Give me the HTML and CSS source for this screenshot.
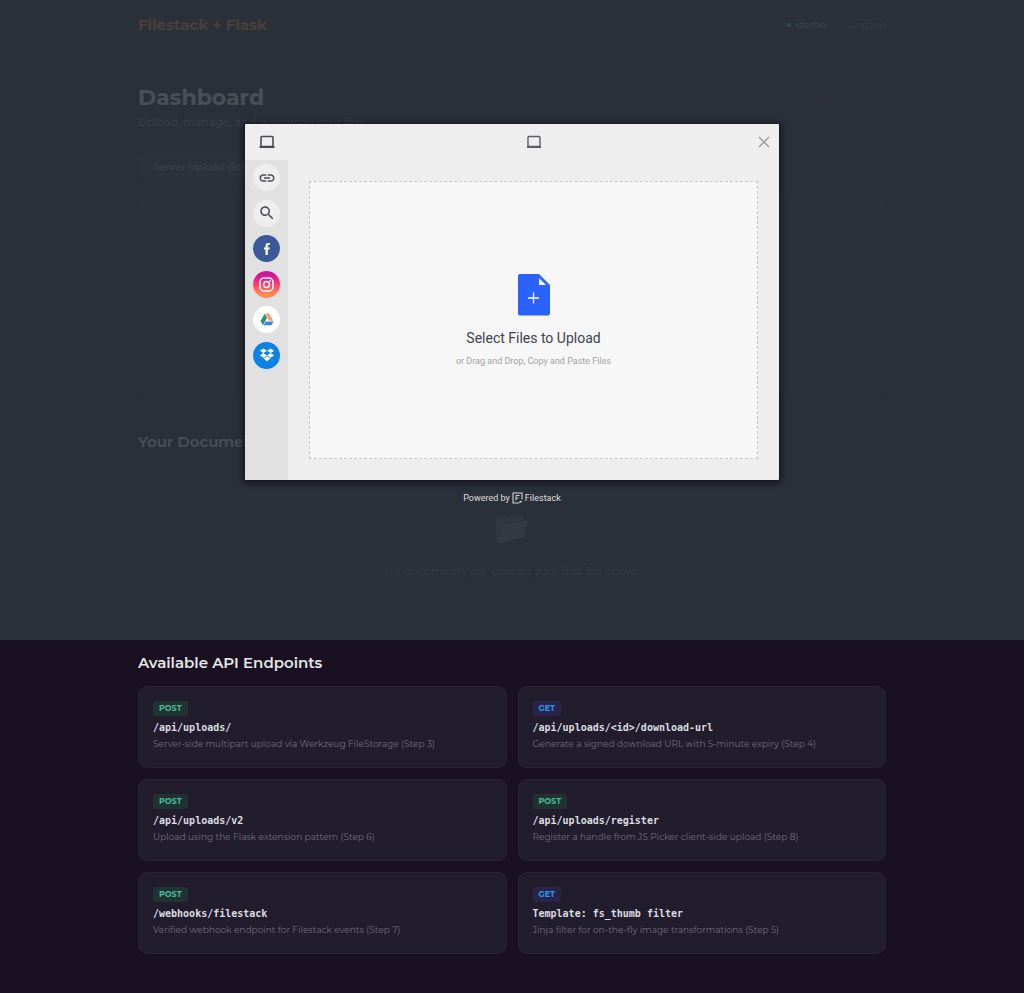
FILE: index.html
```html
<!DOCTYPE html>
<html lang="en">

<head>
    <meta charset="utf-8">
    <meta name="viewport" content="width=device-width, initial-scale=1">
    <title>Dashboard - Filestack + Flask</title>
    <link rel="stylesheet" href="styles.css">
</head>

<body>
    <div class="stage">
        <header class="navbar">
            <div class="container nav-inner">
                <a href="#" class="brand">Filestack + Flask</a>
                <nav class="nav-links">
                    <span class="user"><span class="dot"></span>demo</span>
                    <a href="#" class="logout">Logout</a>
                </nav>
            </div>
        </header>

        <main class="container dashboard">
            <h1>Dashboard</h1>
            <p class="subtitle">Upload, manage, and download your files.</p>
            <div class="tabs">
                <button type="button" class="tab">Server Upload (Step 3)</button>
            </div>
            <div class="upload-area"></div>
            <h2>Your Documents</h2>
            <div class="empty">
                <svg class="folder" width="34" height="32" viewBox="0 0 34 32">
                    <path d="M1 4 L10 2 L13 4 L28 1 V7 L8 12 L3 30 L1 29 Z" fill="#3d4352" />
                    <path d="M7 12 L33 7 L29 24 L3 31 Z" fill="#505664" />
                </svg>
                <p>No documents yet. Upload your first file above.</p>
            </div>
        </main>

        <!-- File picker -->
        <div class="overlay">
            <div class="picker" role="dialog" aria-label="File picker">
                <div class="picker-header">
                    <div class="source-current">
                        <svg width="16" height="14" viewBox="0 0 16 14">
                            <rect x="2" y="1.500" width="12" height="10" rx="1" fill="none" stroke="#4a4a55" stroke-width="1.6" />
                            <path d="M0.5 11 H15.5 V13 H0.5 Z" fill="#4a4a55" />
                        </svg>
                    </div>
                    <div class="source-title">
                        <svg width="16" height="14" viewBox="0 0 16 14">
                            <rect x="2" y="1.500" width="12" height="10" rx="1" fill="none" stroke="#5c5c68" stroke-width="1.4" />
                            <path d="M1 11 H15 V13 H1 Z" fill="#5c5c68" />
                        </svg>
                    </div>
                    <button type="button" class="close" aria-label="Close">
                        <svg width="12" height="12" viewBox="0 0 12 12">
                            <path d="M1 1 L11 11 M11 1 L1 11" stroke="#9a9a9d" stroke-width="1.4" />
                        </svg>
                    </button>
                </div>

                <div class="picker-body">
                    <div class="sources">
                        <button type="button" class="source" aria-label="Link">
                            <svg width="18" height="18" viewBox="0 0 24 24">
                                <path fill="#4c4c57" d="M3.9 12c0-1.71 1.39-3.1 3.1-3.1h4V7H7c-2.76 0-5 2.24-5 5s2.24 5 5 5h4v-1.9H7c-1.71 0-3.1-1.39-3.1-3.1zM8 13h8v-2H8v2zm9-6h-4v1.9h4c1.71 0 3.1 1.39 3.1 3.1s-1.39 3.1-3.1 3.1h-4V17h4c2.76 0 5-2.24 5-5s-2.24-5-5-5z" />
                            </svg>
                        </button>
                        <button type="button" class="source" aria-label="Search">
                            <svg width="18" height="18" viewBox="0 0 24 24">
                                <path fill="#4c4c57" d="M15.5 14h-.79l-.28-.27C15.41 12.59 16 11.11 16 9.5 16 5.91 13.09 3 9.5 3S3 5.91 3 9.5 5.91 16 9.5 16c1.61 0 3.09-.59 4.23-1.57l.27.28v.79l5 4.99L20.49 19l-4.99-5zm-6 0C7.01 14 5 11.99 5 9.5S7.01 5 9.5 5 14 7.01 14 9.5 11.99 14 9.5 14z" />
                            </svg>
                        </button>
                        <button type="button" class="source facebook" aria-label="Facebook">
                            <svg width="14" height="14" viewBox="0 0 14 14">
                                <path fill="#fff" d="M5.5 13 V7.6 H4 V5.4 H5.5 V4 C5.5 2 6.6 1 8.3 1 H9.8 V3.1 H8.8 C8 3.1 7.8 3.5 7.8 4.1 V5.4 H9.8 L9.5 7.6 H7.8 V13 Z" />
                            </svg>
                        </button>
                        <button type="button" class="source instagram" aria-label="Instagram">
                            <svg width="15" height="15" viewBox="0 0 15 15">
                                <rect x="1" y="1" width="13" height="13" rx="4" fill="none" stroke="#fff" stroke-width="1.5" />
                                <circle cx="7.5" cy="7.5" r="3" fill="none" stroke="#fff" stroke-width="1.5" />
                                <circle cx="11.2" cy="3.8" r="0.9" fill="#fff" />
                            </svg>
                        </button>
                        <button type="button" class="source drive" aria-label="Google Drive">
                            <svg width="14" height="13" viewBox="0 0 14 13">
                                <path fill="#2f9170" d="M4.6 0.8 L7 4.7 L2.9 12.2 L0.5 8 Z" />
                                <path fill="#f3a166" d="M5.2 0.5 H9.2 L13.4 7.8 H9.2 Z" />
                                <path fill="#4285e8" d="M5.5 8.6 H13.6 L11.5 12.3 H3.5 Z" />
                            </svg>
                        </button>
                        <button type="button" class="source dropbox" aria-label="Dropbox">
                            <svg width="16" height="14" viewBox="0 0 16 14">
                                <path fill="#fff" d="M4.4 0.5 L8 2.8 L4.4 5.1 L0.8 2.8 Z M11.6 0.5 L15.2 2.8 L11.6 5.1 L8 2.8 Z M4.4 5.1 L8 7.4 L4.4 9.7 L0.8 7.4 Z M11.6 5.1 L15.2 7.4 L11.6 9.7 L8 7.4 Z M4.5 10.5 L8 8.3 L11.5 10.5 L8 13.2 Z" />
                            </svg>
                        </button>
                    </div>

                    <div class="picker-content">
                        <button type="button" class="drop-zone">
                            <svg width="32" height="42" viewBox="0 0 32 42">
                                <path fill="#2a62fb" d="M2 0 H21 L32 11 V39 Q32 41.500 30 41.500 H2 Q0 41.500 0 39.500 V2 Q0 0 2 0 Z" />
                                <path fill="#f7f7f7" d="M21 4 V11 H28 Z" />
                                <path d="M10 24 H21 M15.500 18.500 V29.500" stroke="#fff" stroke-width="1.3" />
                            </svg>
                            <span class="drop-title">Select Files to Upload</span>
                            <span class="drop-hint">or Drag and Drop, Copy and Paste Files</span>
                        </button>
                    </div>
                </div>
            </div>

            <div class="powered">
                Powered by
                <svg width="11" height="12" viewBox="0 0 11 12">
                    <path d="M10 7.500 V1 H1 V11 H7" fill="none" stroke="#d5d6d8" stroke-width="1.1" />
                    <path d="M4 8.500 V3.500 H7.500 M4 6 H6.500" fill="none" stroke="#d5d6d8" stroke-width="1" />
                    <path d="M7.500 11.500 V9 H10.500 Z" fill="#d5d6d8" />
                </svg>
                Filestack
            </div>
        </div>
    </div>

    <section class="container endpoints">
        <h2>Available API Endpoints</h2>
        <div class="endpoint-grid">
            <div class="card">
                <span class="method post">POST</span>
                <code>/api/uploads/</code>
                <p>Server-side multipart upload via Werkzeug FileStorage (Step 3)</p>
            </div>
            <div class="card">
                <span class="method get">GET</span>
                <code>/api/uploads/&lt;id&gt;/download-url</code>
                <p>Generate a signed download URL with 5-minute expiry (Step 4)</p>
            </div>
            <div class="card">
                <span class="method post">POST</span>
                <code>/api/uploads/v2</code>
                <p>Upload using the Flask extension pattern (Step 6)</p>
            </div>
            <div class="card">
                <span class="method post">POST</span>
                <code>/api/uploads/register</code>
                <p>Register a handle from JS Picker client-side upload (Step 8)</p>
            </div>
            <div class="card">
                <span class="method post">POST</span>
                <code>/webhooks/filestack</code>
                <p>Verified webhook endpoint for Filestack events (Step 7)</p>
            </div>
            <div class="card">
                <span class="method get">GET</span>
                <code>Template: fs_thumb filter</code>
                <p>Jinja filter for on-the-fly image transformations (Step 5)</p>
            </div>
        </div>
    </section>
</body>

</html>
```
FILE: styles.css
```css
* {
    box-sizing: border-box;
    margin: 0;
    padding: 0;
}

body {
    font-family: Montserrat, Inter, sans-serif;
    background-color: #191122;
    color: #e6e6e8;
}

button {
    font-family: inherit;
    border: none;
    cursor: pointer;
}

svg {
    display: block;
}

.container {
    width: 100%;
    max-width: 748px;
    margin: 0 auto;
}

/* Top part of the page, covered by the picker overlay */
.stage {
    position: relative;
    padding-bottom: 60px;
    /* faint glow in the top right corner */
    background: radial-gradient(circle at calc(100% - 89px) -346px, #28102a 0, #28102a 462px, transparent 464px);
}

.navbar {
    height: 49px;
    background-color: #1c1a1d;
}

.nav-inner {
    height: 100%;
    display: flex;
    align-items: center;
    justify-content: space-between;
}

.brand {
    font-size: 15px;
    font-weight: 700;
    text-decoration: none;
    color: #f07a33;
}

.nav-links {
    display: flex;
    align-items: center;
    gap: 24px;
    font-size: 10px;
}

.user {
    display: flex;
    align-items: center;
    gap: 5px;
    font-weight: 500;
    color: #8c8896;
}

.dot {
    width: 4px;
    height: 4px;
    border-radius: 50%;
    background-color: #4fe0c0;
}

.logout {
    text-decoration: none;
    color: #6e6a78;
}

.dashboard {
    padding-top: 34px;
}

.dashboard h1 {
    font-size: 22px;
    line-height: 30px;
    font-weight: 700;
}

.subtitle {
    margin-bottom: 21px;
    font-size: 11px;
    line-height: 18px;
    color: #8d8995;
}

.tabs {
    width: 60%;
    margin-bottom: 16px;
    border-radius: 8px;
    background-color: #211d2c;
}

.tab {
    height: 28px;
    padding: 0 15px;
    font-size: 10px;
    font-weight: 500;
    color: #9692a0;
    background: none;
}

.upload-area {
    height: 202px;
    margin-bottom: 33px;
    border: 1px dashed #343040;
    border-radius: 12px;
    background-color: #1f1b29;
}

h2 {
    font-size: 15px;
    line-height: 22px;
    font-weight: 600;
}

.empty {
    display: flex;
    flex-direction: column;
    align-items: center;
    gap: 17px;
    padding-top: 60px;
    font-size: 11px;
    line-height: 18px;
    color: #625e6d;
}

/* Picker */
.overlay {
    position: absolute;
    inset: 0;
    padding-top: 124px;
    display: flex;
    flex-direction: column;
    align-items: center;
    background-color: rgba(45, 53, 62, 0.86);
    font-family: Roboto, sans-serif;
}

.picker {
    width: 90%;
    max-width: 534px;
    background-color: #eeeeee;
    border-radius: 1px;
    overflow: hidden;
    box-shadow: 0 1px 6px 2px rgba(10, 8, 18, 0.7);
}

.picker-header {
    height: 36px;
    display: flex;
    align-items: center;
}

.source-current {
    width: 43px;
    display: flex;
    justify-content: center;
}

.source-title {
    flex: 1;
    padding-left: 30px;
    display: flex;
    justify-content: center;
}

.close {
    width: 30px;
    height: 30px;
    display: flex;
    align-items: center;
    justify-content: center;
    background: none;
}

.picker-body {
    display: flex;
    height: 320px;
}

.sources {
    width: 43px;
    padding: 4px 8px 111px;
    display: flex;
    flex-direction: column;
    justify-content: space-between;
    background-color: #e1e1e1;
}

.source {
    width: 27px;
    height: 27px;
    border-radius: 50%;
    display: flex;
    align-items: center;
    justify-content: center;
    background-color: #eeeeee;
}

.facebook {
    background-color: #3b5998;
}

.instagram {
    background: linear-gradient(#d4129c 15%, #fb3572 45%, #ff8a55 85%);
}

.drive {
    background-color: #ffffff;
}

.dropbox {
    background-color: #0b82e6;
}

.picker-content {
    flex: 1;
    padding: 21px;
}

.drop-zone {
    width: 100%;
    height: 100%;
    padding-top: 2px;
    display: flex;
    flex-direction: column;
    align-items: center;
    justify-content: center;
    border: 1px dashed #c8c8c8;
    background-color: #f7f7f7;
}

.drop-title {
    margin-top: 12px;
    font-size: 14px;
    line-height: 20px;
    color: #434350;
}

.drop-hint {
    margin-top: 5px;
    font-size: 9px;
    line-height: 16px;
    color: #a3a3a3;
}

.powered {
    margin-top: 11px;
    display: flex;
    align-items: center;
    gap: 2px;
    font-size: 9px;
    line-height: 14px;
    color: #dededf;
}

/* API endpoints */
.endpoints {
    padding-top: 12px;
    padding-bottom: 41px;
}

.endpoints h2 {
    margin-bottom: 12px;
}

.endpoint-grid {
    display: grid;
    grid-template-columns: 1fr 1fr;
    gap: 11px;
}

.card {
    display: flex;
    flex-direction: column;
    align-items: flex-start;
    padding: 14px;
    border: 1px solid #282432;
    border-radius: 9px;
    background-color: #221d2d;
}

.method {
    padding: 0 6px;
    border-radius: 3px;
    font-size: 8px;
    line-height: 15px;
    font-weight: 700;
}

.post {
    color: #47b99b;
    background-color: #203332;
}

.get {
    color: #2b96ef;
    background-color: #282548;
}

.card code {
    margin-top: 4px;
    font-family: "DejaVu Sans Mono", monospace;
    font-size: 10px;
    font-weight: 600;
    line-height: 16px;
    color: #dcdce0;
}

.card p {
    padding-bottom: 1px;
    font-size: 9px;
    line-height: 16px;
    color: #716d7a;
}
```
